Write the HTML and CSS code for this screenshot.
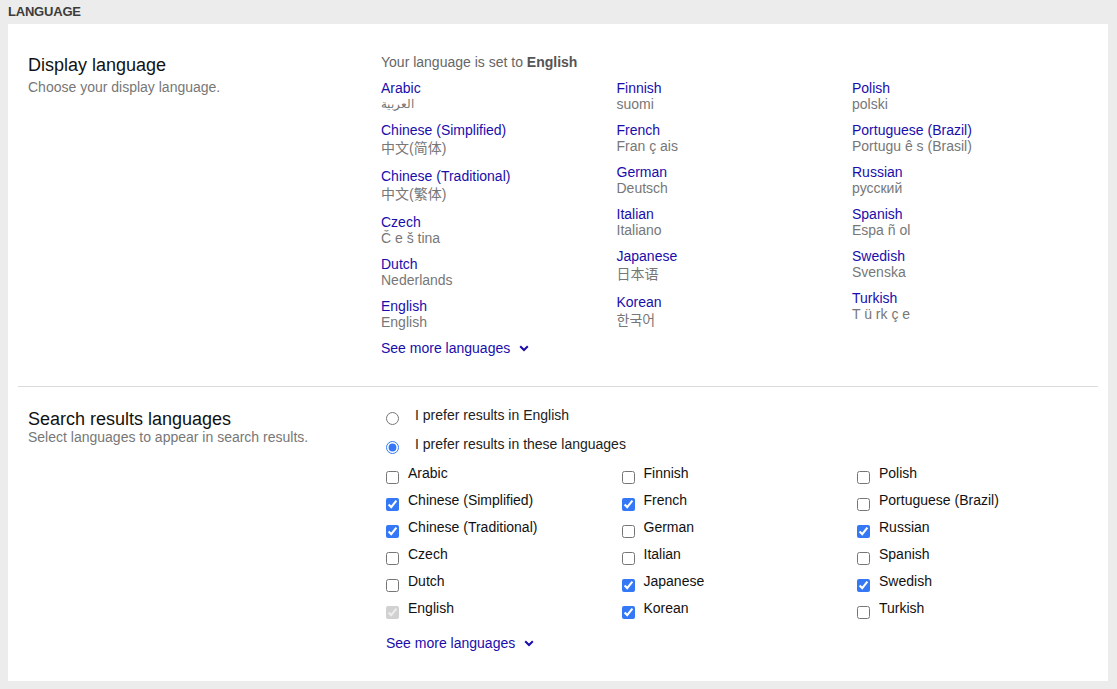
FILE: index.html
```html
<!DOCTYPE html>
<html lang="en">
<head>
<meta charset="utf-8">
<title>Language</title>
<link rel="stylesheet" href="styles.css">
</head>
<body>
<div class="page-title">LANGUAGE</div>
<div class="card">
  <section class="section section-display">
    <div class="section-head">
      <h2 class="section-title">Display language</h2>
      <p class="section-sub">Choose your display language.</p>
    </div>
    <div class="section-body">
      <div class="current">Your language is set to <b>English</b></div>
      <div class="lang-grid">
        <ul class="lang-col">
          <li class="lang"><a class="lang-link" href="#">Arabic</a><span class="lang-native" dir="rtl">العربية</span></li>
          <li class="lang cjk"><a class="lang-link" href="#">Chinese (Simplified)</a><span class="lang-native">中文(简体)</span></li>
          <li class="lang cjk"><a class="lang-link" href="#">Chinese (Traditional)</a><span class="lang-native">中文(繁体)</span></li>
          <li class="lang"><a class="lang-link" href="#">Czech</a><span class="lang-native">Č e š tina</span></li>
          <li class="lang"><a class="lang-link" href="#">Dutch</a><span class="lang-native">Nederlands</span></li>
          <li class="lang"><a class="lang-link" href="#">English</a><span class="lang-native">English</span></li>
        </ul>
        <ul class="lang-col">
          <li class="lang"><a class="lang-link" href="#">Finnish</a><span class="lang-native">suomi</span></li>
          <li class="lang"><a class="lang-link" href="#">French</a><span class="lang-native">Fran ç ais</span></li>
          <li class="lang"><a class="lang-link" href="#">German</a><span class="lang-native">Deutsch</span></li>
          <li class="lang"><a class="lang-link" href="#">Italian</a><span class="lang-native">Italiano</span></li>
          <li class="lang cjk"><a class="lang-link" href="#">Japanese</a><span class="lang-native">日本语</span></li>
          <li class="lang cjk"><a class="lang-link" href="#">Korean</a><span class="lang-native">한국어</span></li>
        </ul>
        <ul class="lang-col">
          <li class="lang"><a class="lang-link" href="#">Polish</a><span class="lang-native">polski</span></li>
          <li class="lang"><a class="lang-link" href="#">Portuguese (Brazil)</a><span class="lang-native">Portugu ê s (Brasil)</span></li>
          <li class="lang"><a class="lang-link" href="#">Russian</a><span class="lang-native">русский</span></li>
          <li class="lang"><a class="lang-link" href="#">Spanish</a><span class="lang-native">Espa ñ ol</span></li>
          <li class="lang"><a class="lang-link" href="#">Swedish</a><span class="lang-native">Svenska</span></li>
          <li class="lang"><a class="lang-link" href="#">Turkish</a><span class="lang-native">T ü rk ç e</span></li>
        </ul>
      </div>
      <a class="more" href="#">See more languages
        <svg class="chev" width="10" height="7" viewBox="0 0 10 7"><path d="M1.2 1.2 5 5 8.8 1.2" fill="none" stroke="currentColor" stroke-width="2"/></svg>
      </a>
    </div>
  </section>
  <div class="divider"></div>
  <section class="section section-search">
    <div class="section-head">
      <h2 class="section-title">Search results languages</h2>
      <p class="section-sub">Select languages to appear in search results.</p>
    </div>
    <div class="section-body search-body">
      <label class="radio-row"><input type="radio" name="pref" class="radio"><span>I prefer results in English</span></label>
      <label class="radio-row"><input type="radio" name="pref" class="radio" checked><span>I prefer results in these languages</span></label>
      <div class="check-grid">
        <div class="check-col">
          <label class="check-row"><input type="checkbox" class="check"><span>Arabic</span></label>
          <label class="check-row"><input type="checkbox" class="check" checked><span>Chinese (Simplified)</span></label>
          <label class="check-row"><input type="checkbox" class="check" checked><span>Chinese (Traditional)</span></label>
          <label class="check-row"><input type="checkbox" class="check"><span>Czech</span></label>
          <label class="check-row"><input type="checkbox" class="check"><span>Dutch</span></label>
          <label class="check-row"><input type="checkbox" class="check" checked disabled><span>English</span></label>
        </div>
        <div class="check-col">
          <label class="check-row"><input type="checkbox" class="check"><span>Finnish</span></label>
          <label class="check-row"><input type="checkbox" class="check" checked><span>French</span></label>
          <label class="check-row"><input type="checkbox" class="check"><span>German</span></label>
          <label class="check-row"><input type="checkbox" class="check"><span>Italian</span></label>
          <label class="check-row"><input type="checkbox" class="check" checked><span>Japanese</span></label>
          <label class="check-row"><input type="checkbox" class="check" checked><span>Korean</span></label>
        </div>
        <div class="check-col">
          <label class="check-row"><input type="checkbox" class="check"><span>Polish</span></label>
          <label class="check-row"><input type="checkbox" class="check"><span>Portuguese (Brazil)</span></label>
          <label class="check-row"><input type="checkbox" class="check" checked><span>Russian</span></label>
          <label class="check-row"><input type="checkbox" class="check"><span>Spanish</span></label>
          <label class="check-row"><input type="checkbox" class="check" checked><span>Swedish</span></label>
          <label class="check-row"><input type="checkbox" class="check"><span>Turkish</span></label>
        </div>
      </div>
      <a class="more more-search" href="#">See more languages
        <svg class="chev" width="10" height="7" viewBox="0 0 10 7"><path d="M1.2 1.2 5 5 8.8 1.2" fill="none" stroke="currentColor" stroke-width="2"/></svg>
      </a>
    </div>
  </section>
</div>
</body>
</html>
```
FILE: styles.css
```css
* { box-sizing: border-box; }
html, body { margin: 0; padding: 0; }
body {
  background: #ececec;
  font-family: "Liberation Sans", Arial, "Noto Sans CJK SC", sans-serif;
  font-size: 14px;
  color: #222;
  width: 1117px;
  height: 689px;
  overflow: hidden;
}
.page-title {
  font-size: 13px;
  font-weight: bold;
  color: #3c3c3c;
  padding: 5px 8px 0 8px;
  height: 24px;
  line-height: 14px;
  letter-spacing: -0.2px;
}
.card {
  background: #fff;
  margin: 0 9px 0 8px;
  padding: 0 10px;
  height: 657px;
}
.section {
  display: flex;
  padding: 0 10px;
}
.section-display { padding-top: 30px; height: 362px; }
.section-search { padding-top: 20px; }
.section-head { width: 353px; flex: none; }
.section-title {
  margin: 0;
  font-family: "Liberation Sans", Arial, sans-serif;
  font-weight: normal;
  font-size: 18px;
  line-height: 20px;
  color: #111;
}
.section-display .section-title { margin-top: 1px; }
.section-search .section-title { margin-top: 2px; }
.section-sub {
  margin: 2px 0 0 0;
  font-size: 14px;
  line-height: 16px;
  color: #777;
}
.section-display .section-sub { margin-top: 4px; }
.section-search .section-sub { margin-top: 0; }
.section-body { flex: 1; }
.current {
  color: #666;
  font-size: 14px;
  line-height: 16px;
  margin-bottom: 10px;
}
.current b { color: #555; }
.lang-grid { display: flex; }
.lang-col {
  list-style: none;
  margin: 0;
  padding: 0;
  width: 235.5px;
  flex: none;
  display: flex;
  flex-direction: column;
  gap: 10px;
}
.lang { display: flex; flex-direction: column; }
.lang-link {
  color: #1a0dab;
  text-decoration: none;
  line-height: 16px;
}
.lang-native {
  color: #777;
  line-height: 16px;
  text-align: left;
}
.lang.cjk .lang-native { line-height: 20px; }
.lang-native[dir="rtl"] { font-size: 12px; }
.more {
  display: inline-flex;
  align-items: center;
  gap: 9px;
  margin-top: 10px;
  color: #1a0dab;
  text-decoration: none;
  line-height: 16px;
}
.chev { margin-top: 1px; }
.divider {
  height: 1px;
  background: #dadada;
}
.search-body { padding-left: 5px; }
.radio-row {
  display: flex;
  align-items: flex-start;
  height: 29px;
  line-height: 16px;
}
.radio {
  margin: 5px 16px 0 0;
  width: 13px;
  height: 13px;
  accent-color: #3478f6;
}
.check-grid { display: flex; margin-top: 0; }
.check-col { width: 235.5px; flex: none; display: flex; flex-direction: column; }
.check-row {
  display: flex;
  align-items: flex-start;
  height: 27px;
  line-height: 16px;
  color: #111;
}
.check {
  margin: 6px 9px 0 0;
  width: 13px;
  height: 13px;
  accent-color: #3478f6;
}
.more-search { margin-top: 8px; }
```
